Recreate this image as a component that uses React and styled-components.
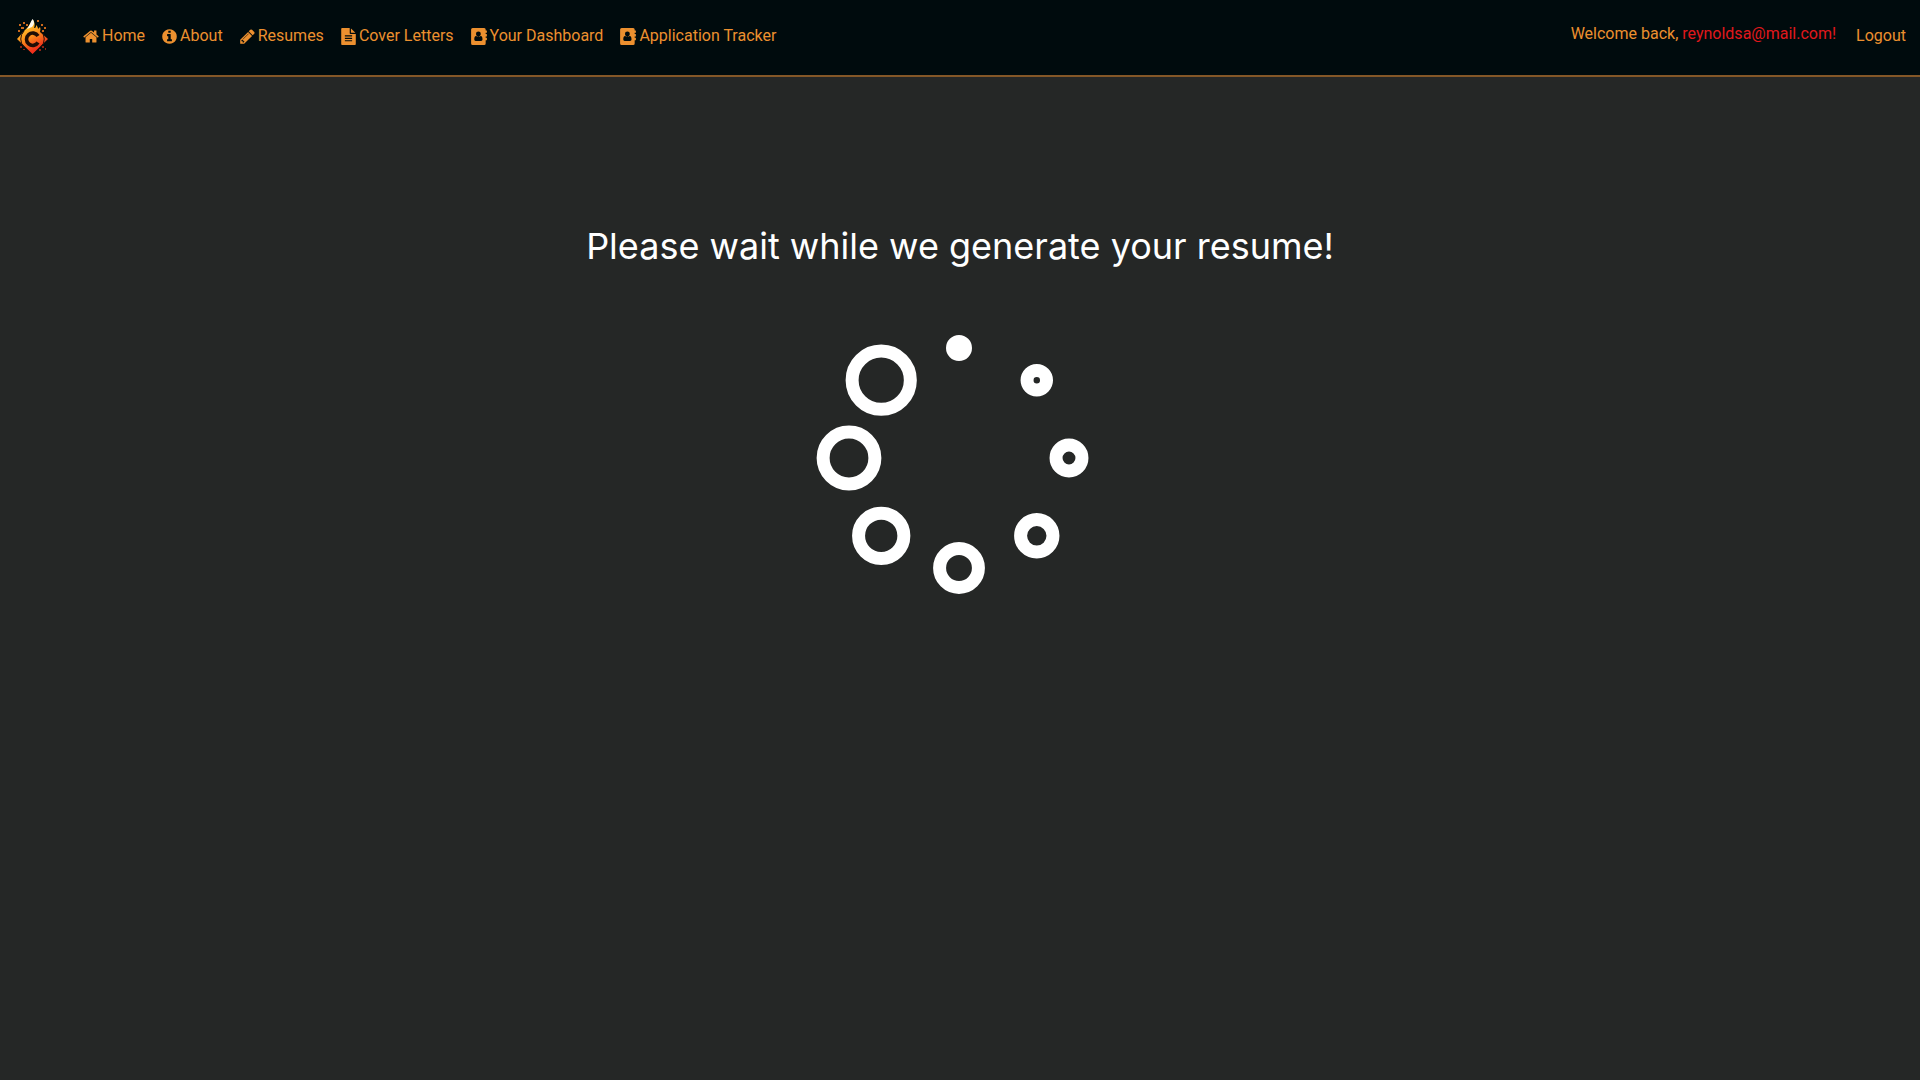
import React from "react";
import styled, { createGlobalStyle } from "styled-components";

const GlobalStyle = createGlobalStyle`
  * { box-sizing: border-box; }
  body {
    margin: 0;
    background: #252726;
    color: #ffffff;
    font-family: Inter, "Liberation Sans", sans-serif;
  }
`;

const Header = styled.header`
  display: flex;
  align-items: center;
  min-height: 77px;
  padding: 0 14px 3px 16px;
  background: #000b0d;
  border-bottom: 2px solid #845727;
  font: 16px/24px Roboto, "Liberation Sans", sans-serif;
`;

const Brand = styled.a`
  display: flex;
  margin-right: 34px;
`;

const Nav = styled.nav`
  display: flex;
  flex: 1;
  gap: 17px;
`;

const NavLink = styled.a`
  display: flex;
  align-items: center;
  gap: 3px;
  color: #ec902f;
  text-decoration: none;
  white-space: nowrap;
`;

const Account = styled.div`
  display: flex;
  align-items: center;
  gap: 20px;
`;

const Welcome = styled.p`
  margin: 0;
  padding-bottom: 4px;
  color: #ec902f;
`;

const Email = styled.span`
  color: #e0181c;
`;

const Main = styled.main`
  display: flex;
  flex-direction: column;
  align-items: center;
  padding-top: 143px;
`;

const Title = styled.h1`
  margin: 0;
  font-size: 36px;
  line-height: 52px;
  font-weight: 400;
`;

const Spinner = styled.svg`
  display: block;
  margin-top: 42px;
`;

const ICONS = {
  home: { x: 64, width: 1664, d: "M1472 992v480q0 26-19 45t-45 19h-384v-384h-256v384h-384q-26 0-45-19t-19-45v-480q0-1 .5-3t.5-3l575-474 575 474q1 2 1 6zm223-69l-62 74q-8 9-21 11h-3q-13 0-21-7l-692-577-692 577q-12 8-24 7-13-2-21-11l-62-74q-8-10-7-23.5t11-21.5l719-599q32-26 76-26t76 26l244 204v-195q0-14 9-23t23-9h192q14 0 23 9t9 23v408l219 182q10 8 11 21.5t-7 23.5z" },
  info: { x: 128, width: 1536, d: "M1152 1376v-160q0-14-9-23t-23-9h-96v-512q0-14-9-23t-23-9h-320q-14 0-23 9t-9 23v160q0 14 9 23t23 9h96v320h-96q-14 0-23 9t-9 23v160q0 14 9 23t23 9h448q14 0 23-9t9-23zm-128-896v-160q0-14-9-23t-23-9h-192q-14 0-23 9t-9 23v160q0 14 9 23t23 9h192q14 0 23-9t9-23zm640 416q0 209-103 385.5t-279.5 279.5-385.5 103-385.5-103-279.5-279.5-103-385.5 103-385.5 279.5-279.5 385.5-103 385.5 103 279.5 279.5 103 385.5z" },
  pencil: { x: 128, width: 1536, d: "M491 1536l91-91-235-235-91 91v107h128v128h107zm523-928q0-22-22-22-10 0-17 7l-542 542q-7 7-7 17 0 22 22 22 10 0 17-7l542-542q7-7 7-17zm-54-192l416 416-832 832h-416v-416zm683 96q0 53-37 90l-166 166-416-416 166-165q36-38 90-38 53 0 91 38l235 234q37 39 37 91z" },
  file: { x: 128, width: 1536, d: "M1596 476q14 14 28 36h-472v-472q22 14 36 28zm-476 164h544v1056q0 40-28 68t-68 28h-1344q-40 0-68-28t-28-68v-1600q0-40 28-68t68-28h800v544q0 40 28 68t68 28zm160 736v-64q0-14-9-23t-23-9h-704q-14 0-23 9t-9 23v64q0 14 9 23t23 9h704q14 0 23-9t9-23zm0-256v-64q0-14-9-23t-23-9h-704q-14 0-23 9t-9 23v64q0 14 9 23t23 9h704q14 0 23-9t9-23zm0-256v-64q0-14-9-23t-23-9h-704q-14 0-23 9t-9 23v64q0 14 9 23t23 9h704q14 0 23-9t9-23z" },
  book: { x: 0, width: 1664, d: "M160 0H1376Q1536 0 1536 160V256H1632Q1664 256 1664 288V480Q1664 512 1632 512H1536V640H1632Q1664 640 1664 672V864Q1664 896 1632 896H1536V1024H1632Q1664 1024 1664 1056V1248Q1664 1280 1632 1280H1536V1632Q1536 1792 1376 1792H160Q0 1792 0 1632V160Q0 0 160 0zM1201 1199C1201 1026 1162 833 1004 833C955 882 877 909 768 909C659 909 581 882 532 833C374 833 335 1026 335 1199C335 1296 399 1376 477 1376H1059C1137 1376 1201 1296 1201 1199zM1027 641A259 259 0 1 0 509 641A259 259 0 1 0 1027 641z" },
};

const NAV = [
  ["Home", "home"],
  ["About", "info"],
  ["Resumes", "pencil"],
  ["Cover Letters", "file"],
  ["Your Dashboard", "book"],
  ["Application Tracker", "book"],
];

function Icon({ name }) {
  const { x, width, d } = ICONS[name];
  return (
    <svg width={width > 1600 ? 16 : 15} height="17" viewBox={`${x} 0 ${width} 1792`} fill="currentColor" fillRule="evenodd" aria-hidden="true">
      <path d={d} />
    </svg>
  );
}

function Logo() {
  return (
    <svg width="33" height="36" viewBox="0 0 33 36" aria-hidden="true">
      <defs>
        <linearGradient id="flame" x1="0.2" y1="0" x2="0.7" y2="1">
          <stop offset="0.2" stopColor="#ffc02a" />
          <stop offset="0.5" stopColor="#fb8a1c" />
          <stop offset="0.85" stopColor="#f0301c" />
        </linearGradient>
      </defs>
      <path fill="url(#flame)" d="M1 21L9 12C13 9 14 5 17 2C19 5 19 7 18 10C20 10 20 9 20 7C22 9 22 10 22 11L24 9C25 11 24 13 24 14L32 21L16.5 36z" />
      <path fill="#fffaf0" d="M11 11C14 8 14 4 16.5 1C19 4 18 7 16 9C14 10 13 10 11 11z" />
      <path d="M8 13A11.5 11.5 0 0 0 8 29M25 13A11.5 11.5 0 0 1 25 29" fill="none" stroke="#2a0f05" strokeWidth="1" />
      <path d="M22 18A6.2 6.2 0 1 0 22 24.5" fill="none" stroke="#1e0d06" strokeWidth="3.6" />
      <g fill="#c9681c">
        <path d="M3 6h2v2h-2zM7 4h2v2h-2zM5 9h3v2h-3zM2 12h2v2h-2zM10 6h2v2h-2zM21 2h2v2h-2zM25 6h2v2h-2zM28 9h2v2h-2zM26 12h2v2h-2z" />
      </g>
      <g fill="#8a2416">
        <path d="M4 28h2v2h-2zM7 31h2v1h-2zM26 28h2v2h-2zM23 31h2v2h-2zM29 30h1v2h-1z" />
      </g>
    </svg>
  );
}

function Loader() {
  return (
    <Spinner width="288" height="288" viewBox="-143 -144 288 288" role="img" aria-label="Loading">
      {Array.from({ length: 8 }, (_, i) => {
        const angle = (i * Math.PI) / 4;
        return (
          <circle
            key={i}
            cx={110 * Math.sin(angle)}
            cy={-110 * Math.cos(angle)}
            r={6.5 + i * 3.23}
            fill="none"
            stroke="#ffffff"
            strokeWidth="13"
          />
        );
      })}
    </Spinner>
  );
}

export default function App() {
  return (
    <>
      <GlobalStyle />
      <Header>
        <Brand href="#" aria-label="Start page"><Logo /></Brand>
        <Nav>
          {NAV.map(([label, icon]) => (
            <NavLink href="#" key={label}><Icon name={icon} />{label}</NavLink>
          ))}
        </Nav>
        <Account>
          <Welcome>Welcome back, <Email>reynoldsa@mail.com!</Email></Welcome>
          <NavLink href="#">Logout</NavLink>
        </Account>
      </Header>
      <Main>
        <Title>Please wait while we generate your resume!</Title>
        <Loader />
      </Main>
    </>
  );
}
